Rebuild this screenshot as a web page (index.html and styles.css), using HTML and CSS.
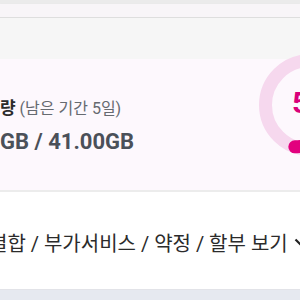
FILE: index.html
```html
<!DOCTYPE html>
<html lang="ko">
<head>
    <meta charset="UTF-8">
    <meta name="viewport" content="width=device-width, initial-scale=1.0">
    <title>데이터 사용량</title>
    <link rel="stylesheet" href="styles.css">
</head>
<body>
    <div class="topbar"></div>
    <div class="subbar"></div>
    <div class="spacer"></div>

    <section class="usage">
        <div class="usage-title"><b>량</b> <span class="period">(남은 기간 5일)</span></div>
        <div class="usage-amount">GB / 41.00GB</div>

        <svg class="ring" width="110" height="130" viewBox="0 0 110 130">
            <circle cx="60" cy="66" r="44.5" fill="none" stroke="#f6d8ee" stroke-width="13"/>
            <path d="M 44.8 107.8 A 44.5 44.5 0 0 0 60 21.5" fill="none" stroke="#e2007e" stroke-width="13" stroke-linecap="round"/>
            <text x="42" y="74" class="ring-text">53%</text>
        </svg>
    </section>

    <section class="links">
        <div class="links-row">
            <span>결합 / 부가서비스 / 약정 / 할부 보기</span>
            <svg class="chevron" width="14" height="9" viewBox="0 0 14 9">
                <path d="M1.5 1.5 L7 7 L12.5 1.5" fill="none" stroke="#222" stroke-width="2.2"/>
            </svg>
        </div>
    </section>

    <div class="footer"></div>
</body>
</html>
```

FILE: styles.css
```css
body { margin: 0; width: 300px; height: 300px; overflow: hidden; font-family: Roboto, "Noto Sans CJK KR", sans-serif; background: #ffffff; }
.topbar { height: 4px; background: #ebebeb; }
.subbar { height: 13px; background: #f8f5f8; border-bottom: 1px solid #dedede; box-shadow: 0 1px 2px rgba(0, 0, 0, 0.06); }
.spacer { height: 41px; background: #f6f6f6; }

.usage { position: relative; height: 133px; background: #fdf8fd; border-bottom: 2px solid #ececec; box-sizing: border-box; padding-top: 37px; }
.usage-title { font-size: 16px; line-height: 24px; color: #2b2b2b; white-space: nowrap; }
.usage-title b { font-size: 17px; font-weight: 700; }
.period { color: #666a70; }
.usage-amount { margin-top: 7px; font-size: 22px; font-weight: 700; line-height: 28px; color: #4b5059; white-space: nowrap; }
.ring { position: absolute; left: 250px; top: -20px; overflow: visible; }
.ring-text { font-family: Roboto, sans-serif; font-size: 30px; font-weight: 700; fill: #d9007a; }

.links { height: 97px; background: #ffffff; border-bottom: 1px solid #e2e3e8; display: flex; align-items: center; }
.links-row { display: flex; align-items: center; gap: 6px; margin-left: -11px; margin-top: 4px; font-size: 20px; color: #2b2b2b; white-space: nowrap; }
.chevron { flex: none; }
.footer { height: 10px; background: #e6e9f0; }
```
